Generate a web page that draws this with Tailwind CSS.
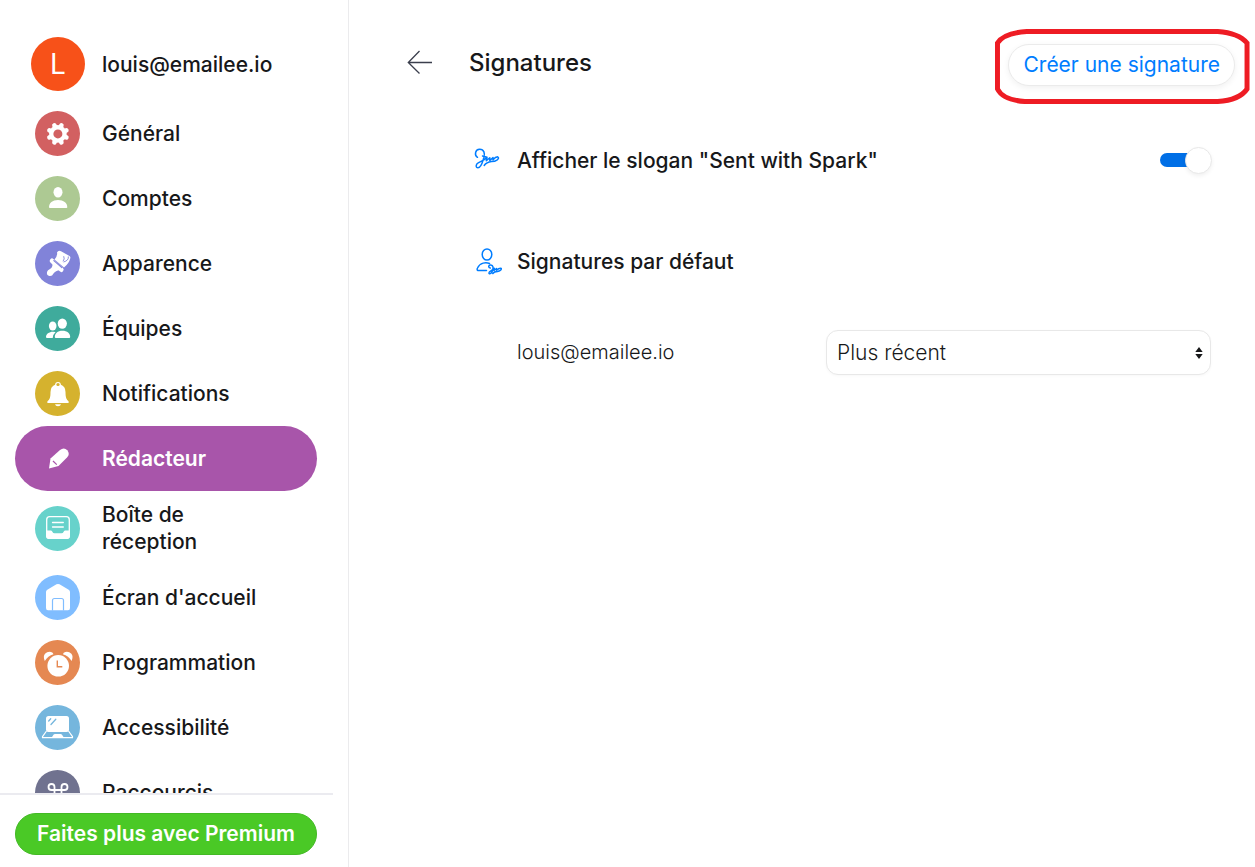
<!DOCTYPE html>
<html lang="fr">
<head>
<meta charset="utf-8">
<meta name="viewport" content="width=device-width, initial-scale=1">
<title>Signatures</title>
<script src="https://cdn.jsdelivr.net/npm/@tailwindcss/browser@4"></script>
</head>
<body class="flex h-screen overflow-hidden bg-white font-['Inter',sans-serif] text-[21px] leading-[27px] text-[#17181a]">
<aside class="flex w-[349px] shrink-0 flex-col border-r border-[#ebebed]">
  <div class="flex min-h-0 flex-1 flex-col overflow-y-auto [scrollbar-width:none] pr-[31px] pl-[15px] pt-[37px] font-medium">
    <div class="mb-[10px] flex shrink-0 items-center gap-[17px] pl-4">
      <span class="flex size-[54px] items-center justify-center rounded-full bg-[#f75119] text-[28px] font-normal text-white">L</span>
      <span>louis@emailee.io</span>
    </div>
    <nav class="flex flex-col">
      <a href="#" class="flex h-[65px] shrink-0 items-center gap-[22px] px-5">
        <svg class="size-[45px] shrink-0" viewBox="0 0 45 45"><circle cx="22.5" cy="22.5" r="22.5" fill="#d26061"/><path d="M19.400 14.400L26.400 31.400M26.400 14.400L19.400 31.400M14.400 19.400L31.400 26.400M14.400 26.400L31.400 19.400" stroke="#fff" stroke-width="4.600" stroke-linecap="round"/><circle cx="22.900" cy="22.900" r="8.800" fill="#fff"/><circle cx="22.900" cy="22.900" r="4.500" fill="#d26061"/></svg>
        <span>Général</span>
      </a>
      <a href="#" class="flex h-[65px] shrink-0 items-center gap-[22px] px-5">
        <svg class="size-[45px] shrink-0" viewBox="0 0 45 45"><circle cx="22.5" cy="22.5" r="22.5" fill="#adc993"/><g fill="#fff"><ellipse cx="23" cy="16.300" rx="4.500" ry="5.300"/><path d="M14 31.200C14 27 17.500 24 23 24S32.300 27 32.300 31.200Q32.300 32 31.400 32H14.900Q14 32 14 31.200Z"/></g></svg>
        <span>Comptes</span>
      </a>
      <a href="#" class="flex h-[65px] shrink-0 items-center gap-[22px] px-5">
        <svg class="size-[45px] shrink-0" viewBox="0 0 45 45"><circle cx="22.5" cy="22.5" r="22.5" fill="#8183d9"/><path fill="#fff" d="M19.500 18.500Q22.800 14.500 22 11.500Q23.300 9 26 10.300L34.500 15Q35.800 15.900 35.200 17.500Q34 22.500 29 26.500Z"/><path d="M28.700 15.200Q30 18 28 20.300M33.300 15.500Q34 19.500 28.500 21" fill="none" stroke="#8183d9" stroke-width=".9"/><path d="M17 19.800L26.300 28.700" stroke="#fff" stroke-width="4.600" stroke-linecap="round"/><path d="M18.800 19.500L26.800 26.600" stroke="#8183d9" stroke-width="1.100" stroke-linecap="round"/><path fill="#fff" d="M17.500 21L25 29Q20.500 29.500 18.500 32.500Q17.300 35.300 14.500 35Q11.300 34.300 12 31Q12.500 29 15 28Q18 26.500 17.500 21Z"/></svg>
        <span>Apparence</span>
      </a>
      <a href="#" class="flex h-[65px] shrink-0 items-center gap-[22px] px-5">
        <svg class="size-[45px] shrink-0" viewBox="0 0 45 45"><circle cx="22.5" cy="22.5" r="22.5" fill="#3fab9c"/><g fill="#fff"><ellipse cx="27.300" cy="17.600" rx="4.600" ry="5.200"/><ellipse cx="17.700" cy="20" rx="3.800" ry="4.500"/><path d="M19.800 31C19.800 27.500 22.600 24.800 27.400 24.800S35.200 27.500 35.200 31Q35.200 32 34.200 32H20.800Q19.800 32 19.800 31Z"/><path d="M11 31C11 28 14 25.700 18 25.700Q19.600 25.700 20.600 26Q18 28.300 17.700 32H12Q11 32 11 31Z"/></g></svg>
        <span>Équipes</span>
      </a>
      <a href="#" class="flex h-[65px] shrink-0 items-center gap-[22px] px-5">
        <svg class="size-[45px] shrink-0" viewBox="0 0 45 45"><circle cx="22.5" cy="22.5" r="22.5" fill="#d5b22e"/><circle cx="23" cy="13.800" r="2.300" fill="none" stroke="#fff" stroke-width="1.200"/><path fill="#fff" d="M20.500 13.500A2.800 2.800 0 0 0 25.500 13.500Q30.500 15.300 30.500 21C30.500 27 31.500 28.500 33.500 30.200Q34.500 31.900 33 32H13Q11.500 31.900 12.500 30.200C14.500 28.500 15.500 27 15.500 21Q15.500 15.300 20.500 13.500ZM20 33.200H26Q25.500 35.200 23 35.200T20 33.200Z"/></svg>
        <span>Notifications</span>
      </a>
      <a href="#" aria-current="page" class="flex h-[65px] shrink-0 items-center gap-[22px] rounded-full bg-[#a855aa] px-5 font-semibold text-white">
        <svg class="size-[45px] shrink-0" viewBox="0 0 45 45"><path fill="#fff" d="M14 32.500L15.500 22.500L25 14Q29 10.700 32.300 14.200Q35.400 18 32 21.500L23.500 30Z"/><path d="M18 25L21.800 28.600" stroke="#a855aa" stroke-width="1.200"/></svg>
        <span>Rédacteur</span>
      </a>
      <a href="#" class="flex min-h-[65px] shrink-0 items-center gap-[22px] py-[10px] pr-16 pl-5">
        <svg class="size-[45px] shrink-0" viewBox="0 0 45 45"><circle cx="22.5" cy="22.5" r="22.5" fill="#67d2cb"/><rect x="11.700" y="10.700" width="22.600" height="21.600" rx="3" fill="none" stroke="#fff" stroke-width="1.300"/><path d="M17.500 16.500H28.300M17.500 21H28.300" stroke="#fff" stroke-width="1.300" stroke-linecap="round"/><path fill="#fff" d="M11 24.500H16Q17 24.500 17.500 26Q18 27.300 19.500 27.300H26.500Q28 27.300 28.500 26Q29 24.500 30 24.500H35V30Q35 33 32 33H14Q11 33 11 30Z"/></svg>
        <span>Boîte de réception</span>
      </a>
      <a href="#" class="flex h-[65px] shrink-0 items-center gap-[22px] px-5">
        <svg class="size-[45px] shrink-0" viewBox="0 0 45 45"><circle cx="22.5" cy="22.5" r="22.5" fill="#80bdff"/><path fill="#fff" d="M11 17Q11 15.500 12.300 14.800L21.500 9.300Q23 8.600 24.500 9.300L33.700 14.800Q35 15.500 35 17V33Q35 35.200 33 35.200H13Q11 35.200 11 33Z"/><path d="M17.500 35.500V25.500Q17.500 23.500 19.500 23.500H26.500Q28.500 23.500 28.500 25.500V35.500" fill="none" stroke="#80bdff" stroke-width="1.200"/></svg>
        <span>Écran d'accueil</span>
      </a>
      <a href="#" class="flex h-[65px] shrink-0 items-center gap-[22px] px-5">
        <svg class="size-[45px] shrink-0" viewBox="0 0 45 45"><circle cx="22.5" cy="22.5" r="22.5" fill="#e58852"/><g fill="#fff"><circle cx="23.200" cy="25.800" r="10.800"/><path d="M9.800 21Q7.800 16.300 10 13.700Q12.500 11.300 16 12Q18 12.500 18.500 14.200Q12.800 15.800 9.800 21ZM36.600 21Q38.600 16.300 36.400 13.700Q33.900 11.300 30.400 12Q28.400 12.500 27.900 14.200Q33.600 15.800 36.600 21Z"/></g><path d="M22.300 20.500V26.700H27.300" fill="none" stroke="#e58852" stroke-width="1.400"/></svg>
        <span>Programmation</span>
      </a>
      <a href="#" class="flex h-[65px] shrink-0 items-center gap-[22px] px-5">
        <svg class="size-[45px] shrink-0" viewBox="0 0 45 45"><circle cx="22.5" cy="22.5" r="22.5" fill="#75b6dd"/><rect x="11" y="11" width="23" height="16" rx="2.500" fill="#fff"/><path d="M13.700 16L15.700 13.800M16 19.500L20.800 14.300" stroke="#75b6dd" stroke-width="1.300" stroke-linecap="round"/><path d="M11.500 26L7.500 31.700V32.700H37.500V31.700L33.500 26" fill="none" stroke="#fff" stroke-width="1.200" stroke-linejoin="round"/><path fill="#fff" d="M17 32L18.500 29.700Q19 29 20 29H25.500Q26.500 29 27 29.700L28.500 32Z"/></svg>
        <span>Accessibilité</span>
      </a>
      <a href="#" class="flex h-[65px] shrink-0 items-center gap-[22px] px-5">
        <svg class="size-[45px] shrink-0" viewBox="0 0 45 45"><circle cx="22.5" cy="22.5" r="22.5" fill="#70728f"/><path d="M19.500 20H26.500V27H19.500ZM19.500 20H16.500A3 3 0 1 1 19.500 17ZM26.500 20V17A3 3 0 1 1 29.500 20ZM26.500 27H29.500A3 3 0 1 1 26.500 30ZM19.500 27V30A3 3 0 1 1 16.500 27Z" fill="none" stroke="#fff" stroke-width="1.800"/></svg>
        <span>Raccourcis</span>
      </a>
    </nav>
  </div>
  <div class="mr-[15px] border-t-2 border-[#ebebf0] pt-[18px] pr-4 pb-3 pl-[15px]">
    <button type="button" class="flex h-[42px] w-full items-center justify-center rounded-full border border-[#43b925] bg-[#4ac926] pb-px font-semibold text-white">Faites plus avec Premium</button>
  </div>
</aside>
<main class="min-w-0 flex-1">
  <header class="flex items-start pt-[29px] pr-[5px] pl-[58px]">
    <button type="button" aria-label="Retour" class="mt-[21px]">
      <svg class="h-6 w-[26px]" viewBox="0 0 26 24" fill="none" stroke="#3b3f4d" stroke-width="1.300"><path d="M25 12.500H1.500M12.500 1L1.300 12.500L12.500 23.500"/></svg>
    </button>
    <h1 class="mt-5 ml-9 text-[24px] font-medium">Signatures</h1>
    <div class="relative ml-auto pt-[15px] pr-[15px] pb-[18px] pl-[13px]">
      <button type="button" class="flex h-[42px] items-center rounded-full border border-[#ebebeb] bg-white px-[14px] pb-px text-[#007dff] shadow-[0_2px_6px_rgba(0,0,0,0.06)]">Créer une signature</button>
      <svg class="pointer-events-none absolute inset-0 size-full" viewBox="0 0 256 75" preserveAspectRatio="none" fill="none" stroke="#ee1c24" stroke-width="5"><path d="M32 2.500H224Q245 4 253.500 14V60Q246 71 224 72.500H30Q8 71 2.500 60V14Q9 4 32 2.500Z"/></svg>
    </div>
  </header>
  <section class="pr-[43px] pl-[125px] pt-[42px]">
    <div class="flex items-center">
      <svg class="h-6 w-[26px]" viewBox="0 0 26 24" fill="none" stroke="#007dff" stroke-width="1.500" stroke-linecap="round" stroke-linejoin="round"><path d="M3.500 9.300C.2 7.500 1 1.500 5.600 1.300C10 1.200 11.300 5.500 9.800 9.800C8.500 14 7.300 19.800 4 19.800C1.500 19.800 1.600 16.300 4.200 14.800L8.500 12.600Q11 11.500 13 9.300M8.500 8L13 9.300L12.300 12.800L15.800 9.800L15.800 12.500L19 9.600L19 11.800Q21.500 8.800 23.700 8.800Q25.500 9.800 23.300 11.800Q21 13.500 17.500 13.600Q12.500 14.200 10.200 17.500"/></svg>
      <label for="slogan" class="ml-[17px] flex-1 font-medium">Afficher le slogan "Sent with Spark"</label>
      <span class="relative flex h-7 w-[52px] items-center">
        <input id="slogan" type="checkbox" role="switch" checked class="peer absolute inset-0 z-10 size-full cursor-pointer appearance-none">
        <span class="h-[14px] w-[38px] rounded-full bg-[#006fe6]"></span>
        <span class="absolute right-0 size-[27px] rounded-full border border-[#e8e8e8] bg-white shadow-[0_2px_4px_rgba(0,0,0,0.06)]"></span>
      </span>
    </div>
    <h2 class="mt-[73px] flex items-center font-medium">
      <svg class="h-7 w-[28px]" viewBox="0 0 28 28" fill="none" stroke="#007dff" stroke-width="1.500" stroke-linecap="round" stroke-linejoin="round"><ellipse cx="13" cy="7.500" rx="4.800" ry="5.500"/><path d="M12.500 23.500H4C3 23.500 3 22 3.500 21C6 15.500 12 15 15.500 16.500M16.300 21C14 20.500 14.300 17.700 16.800 17.900C19.500 18.200 19.300 21 18.500 23.500C17.700 26.500 15.800 27.300 15 26.200C14.300 24.600 17.500 23.800 20.300 21.300L20 23.500L22.500 21.500V23.300Q25.500 20.700 27.300 21.500Q27.500 23.500 23.500 24.500Q20 24.500 18.800 26.500"/></svg>
      <span class="ml-[15px]">Signatures par défaut</span>
    </h2>
    <div class="mt-[55px] flex items-center pl-[43px]">
      <label for="default-signature" class="flex-1 text-[20px] font-light">louis@emailee.io</label>
      <div class="relative mr-px w-[385px]">
        <select id="default-signature" class="h-[45px] w-full appearance-none rounded-[12px] border border-[#e8e8e8] bg-white px-[10px] font-light shadow-[0_1px_3px_rgba(0,0,0,0.03)]"><option>Plus récent</option></select>
        <svg class="pointer-events-none absolute top-4 right-2 h-[14px] w-2" viewBox="0 0 8 14" fill="#17181a"><path d="M4 1L7.700 6H.3ZM4 13L.3 8H7.700Z"/></svg>
      </div>
    </div>
  </section>
</main>
</body>
</html>
